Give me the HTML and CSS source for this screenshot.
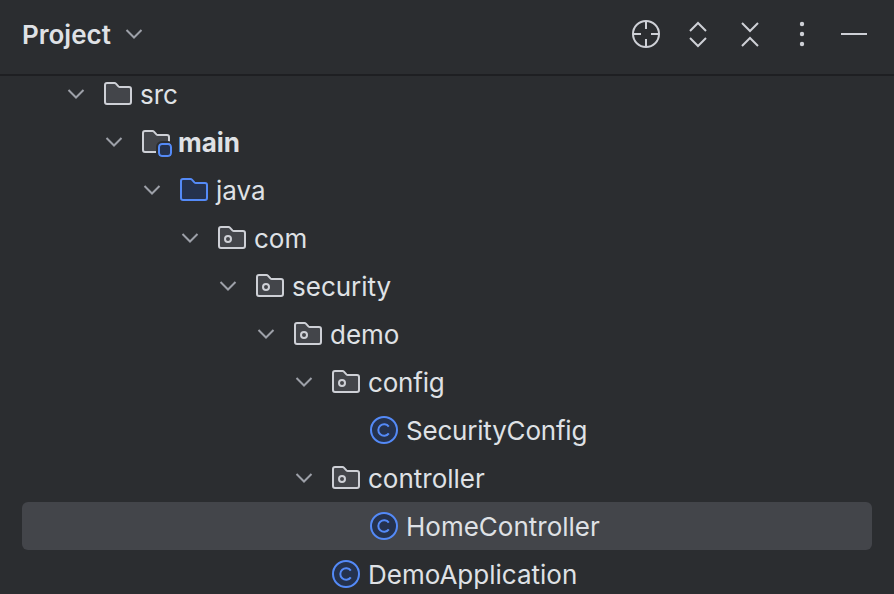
FILE: index.html
```html
<!DOCTYPE html>
<html lang="en">
<head>
  <meta charset="UTF-8" />
  <title>Project</title>
  <link rel="stylesheet" href="styles.css">
</head>
<body>
  <svg class="defs" width="0" height="0">
    <symbol id="chevron" viewBox="0 0 24 24"><path d="M4.5 8 12 15.5 19.5 8" /></symbol>
    <symbol id="folder" viewBox="0 0 32 32">
      <path d="M3 7a2 2 0 0 1 2-2h7.5a2 2 0 0 1 1.4.6l2.5 2.8a2 2 0 0 0 1.5.6H27a2 2 0 0 1 2 2V24a2 2 0 0 1-2 2H5a2 2 0 0 1-2-2Z" />
    </symbol>
    <symbol id="package" viewBox="0 0 32 32">
      <path d="M3 7a2 2 0 0 1 2-2h7.5a2 2 0 0 1 1.4.6l2.5 2.8a2 2 0 0 0 1.5.6H27a2 2 0 0 1 2 2V24a2 2 0 0 1-2 2H5a2 2 0 0 1-2-2Z" />
      <circle cx="12" cy="17" r="3" />
    </symbol>
    <symbol id="class" viewBox="0 0 32 32">
      <circle cx="16" cy="16" r="13" />
      <path class="letter" d="M20.8 12.6a5.8 5.8 0 1 0 0 6.8" />
    </symbol>
  </svg>

  <header class="toolbar">
    <div class="title">
      <h1>Project</h1>
      <svg class="chevron"><use href="#chevron" /></svg>
    </div>
    <div class="actions">
      <svg class="action" viewBox="0 0 32 32">
        <circle cx="16" cy="16" r="13" />
        <path d="M16 3v8M16 21v8M3 16h8M21 16h8" />
      </svg>
      <svg class="action" viewBox="0 0 32 32"><path d="M8 13l8-8 8 8M8 20l8 8 8-8" /></svg>
      <svg class="action" viewBox="0 0 32 32"><path d="M8 5l8 8 8-8M8 28l8-8 8 8" /></svg>
      <svg class="action dots" viewBox="0 0 32 32">
        <circle cx="16" cy="6" r="2.2" />
        <circle cx="16" cy="16" r="2.2" />
        <circle cx="16" cy="26" r="2.2" />
      </svg>
      <svg class="action" viewBox="0 0 32 32"><path d="M3 16h26" /></svg>
    </div>
  </header>

  <ul class="tree">
    <li class="row lvl-0">
      <svg class="chevron"><use href="#chevron" /></svg>
      <svg class="icon folder"><use href="#folder" /></svg>
      <span>src</span>
    </li>
    <li class="row lvl-1">
      <svg class="chevron"><use href="#chevron" /></svg>
      <span class="icon-wrap">
        <svg class="icon folder"><use href="#folder" /></svg>
        <span class="badge"></span>
      </span>
      <strong>main</strong>
    </li>
    <li class="row lvl-2">
      <svg class="chevron"><use href="#chevron" /></svg>
      <svg class="icon folder blue"><use href="#folder" /></svg>
      <span>java</span>
    </li>
    <li class="row lvl-3">
      <svg class="chevron"><use href="#chevron" /></svg>
      <svg class="icon folder"><use href="#package" /></svg>
      <span>com</span>
    </li>
    <li class="row lvl-4">
      <svg class="chevron"><use href="#chevron" /></svg>
      <svg class="icon folder"><use href="#package" /></svg>
      <span>security</span>
    </li>
    <li class="row lvl-5">
      <svg class="chevron"><use href="#chevron" /></svg>
      <svg class="icon folder"><use href="#package" /></svg>
      <span>demo</span>
    </li>
    <li class="row lvl-6">
      <svg class="chevron"><use href="#chevron" /></svg>
      <svg class="icon folder"><use href="#package" /></svg>
      <span class="tight">config</span>
    </li>
    <li class="row lvl-7 leaf">
      <svg class="icon blue"><use href="#class" /></svg>
      <span class="tight">SecurityConfig</span>
    </li>
    <li class="row lvl-6">
      <svg class="chevron"><use href="#chevron" /></svg>
      <svg class="icon folder"><use href="#package" /></svg>
      <span>controller</span>
    </li>
    <li class="row lvl-7 leaf selected">
      <svg class="icon blue"><use href="#class" /></svg>
      <span>HomeController</span>
    </li>
    <li class="row lvl-6 leaf">
      <svg class="icon blue"><use href="#class" /></svg>
      <span>DemoApplication</span>
    </li>
  </ul>
</body>
</html>
```

FILE: styles.css
```css
html, body {
  height: 100%;
}
body {
  margin: 0;
  background-color: #2b2d30;
  color: #dfe1e5;
  font-family: Inter, "Noto Sans", sans-serif;
  font-size: 26px;
  overflow: hidden;
}
.defs {
  position: absolute;
}
.toolbar {
  display: flex;
  justify-content: space-between;
  align-items: center;
  box-sizing: border-box;
  height: 76px;
  padding: 0 24px 6px 22px;
  border-bottom: 2px solid #1e1f22;
}
.title {
  display: flex;
  align-items: center;
  gap: 11px;
}
.title h1 {
  margin: 0;
  font-size: 26px;
  font-weight: 600;
}
.actions {
  display: flex;
  gap: 20px;
}
.action {
  width: 32px;
  height: 32px;
  fill: none;
  stroke: #ced0d6;
  stroke-width: 2;
}
.dots {
  fill: #ced0d6;
  stroke: none;
}
.chevron {
  flex: none;
  width: 24px;
  height: 24px;
  fill: none;
  stroke: #9da0a8;
  stroke-width: 2;
}
.tree {
  list-style: none;
  margin: -6px 0 0;
  padding: 0 22px;
}
.row {
  display: flex;
  align-items: center;
  height: 48px;
  border-radius: 6px;
}
.row > .chevron {
  margin-right: 14px;
}
.lvl-0 { padding-left: 42px; }
.lvl-1 { padding-left: 80px; }
.lvl-2 { padding-left: 118px; }
.lvl-3 { padding-left: 156px; }
.lvl-4 { padding-left: 194px; }
.lvl-5 { padding-left: 232px; }
.lvl-6 { padding-left: 270px; }
.lvl-7 { padding-left: 308px; }
.leaf.lvl-6 { padding-left: 308px; }
.leaf.lvl-7 { padding-left: 346px; }
.selected {
  background-color: #43454a;
}
.tight {
  letter-spacing: -0.2px;
}
.icon {
  flex: none;
  width: 32px;
  height: 32px;
  margin-right: 6px;
  fill: #43454a;
  stroke: #ced0d6;
  stroke-width: 2;
}
.icon.blue {
  fill: #25324d;
  stroke: #548af7;
}
.letter {
  fill: none;
}
.icon-wrap {
  position: relative;
  display: flex;
}
.badge {
  position: absolute;
  left: 18px;
  top: 17px;
  box-sizing: border-box;
  width: 14px;
  height: 14px;
  background-color: #25324d;
  border: 2px solid #548af7;
  border-radius: 4px;
  outline: 2px solid #2b2d30;
}
strong {
  font-weight: 700;
}
```
